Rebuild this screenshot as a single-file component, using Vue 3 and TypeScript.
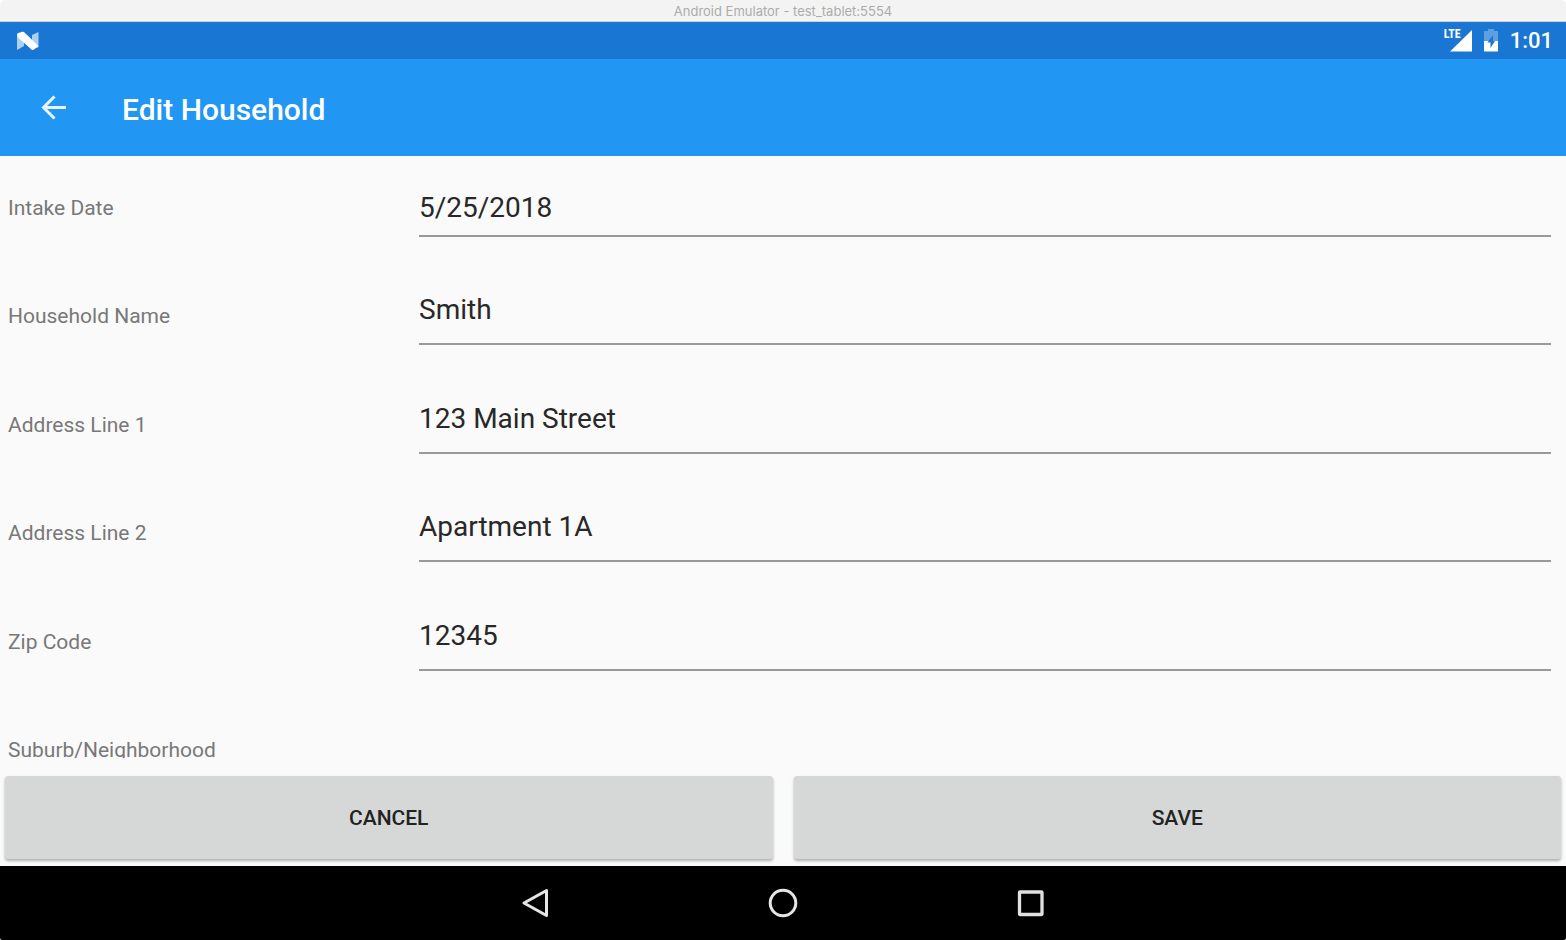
<script setup lang="ts">
import { ref } from 'vue'

interface Field {
  id: string
  label: string
  value: string
}

const fields = ref<Field[]>([
  { id: 'intake-date', label: 'Intake Date', value: '5/25/2018' },
  { id: 'household-name', label: 'Household Name', value: 'Smith' },
  { id: 'address-1', label: 'Address Line 1', value: '123 Main Street' },
  { id: 'address-2', label: 'Address Line 2', value: 'Apartment 1A' },
  { id: 'zip-code', label: 'Zip Code', value: '12345' },
  { id: 'suburb', label: 'Suburb/Neighborhood', value: '' },
])
</script>

<template>
  <div class="window">
    <div class="titlebar">Android Emulator - test_tablet:5554</div>

    <div class="statusbar">
      <svg class="nougat" width="24" height="20" viewBox="0 0 24 20" aria-hidden="true">
        <path d="M1 3 L3 1.500 L8 6 V15 L1 19 Z" fill="#fff" fill-opacity=".65" />
        <path d="M16 4 L22.500 1 V16 L21 17 L16 12 Z" fill="#fff" fill-opacity=".65" />
        <path d="M1.500 2.500 L6 .8 Q7.500 .4 8.500 1.500 L22.500 15 L18 18.500 Q16.500 19.400 15.500 18.400 L1.500 6 Z" fill="#fff" />
      </svg>
      <div class="status-icons">
        <span class="signal">
          <span class="lte">LTE</span>
          <svg width="22" height="22" viewBox="0 0 22 22" aria-hidden="true">
            <path d="M22 0 V21.500 H0 Z" fill="#fff" />
          </svg>
        </span>
        <svg class="battery" width="14" height="24" viewBox="0 0 14 24" aria-hidden="true">
          <path d="M4 0 H10 V2 H14 V12 H0 V2 H4 Z" fill="#fff" fill-opacity=".3" />
          <path d="M0 12 H14 V22.500 H0 Z" fill="#fff" />
          <path d="M9 6 L3.500 13.500 H6.500 V19 L11 12 H9 Z" fill="#1976d2" />
        </svg>
        <span class="clock">1:01</span>
      </div>
    </div>

    <header class="toolbar">
      <button class="back" type="button" aria-label="Back">
        <svg width="26" height="26" viewBox="0 0 26 26" aria-hidden="true">
          <path d="M13.500 1.500 L2.500 12.500 L13.500 23.500 M2.500 12.500 H25" fill="none" stroke="#fff" stroke-opacity=".9" stroke-width="3" />
        </svg>
      </button>
      <h1>Edit Household</h1>
    </header>

    <main class="form">
      <div v-for="field in fields" :key="field.id" class="row">
        <label :for="field.id">{{ field.label }}</label>
        <input :id="field.id" v-model="field.value" type="text" />
      </div>
    </main>

    <div class="actions">
      <button type="button">CANCEL</button>
      <button type="button">SAVE</button>
    </div>

    <nav class="navbar">
      <button type="button" aria-label="Back">
        <svg width="30" height="30" viewBox="0 0 30 30" aria-hidden="true">
          <path d="M26.500 2.500 V27.500 L4 15 Z" fill="none" stroke="#e6e6e6" stroke-width="3" stroke-linejoin="round" />
        </svg>
      </button>
      <button type="button" aria-label="Home">
        <svg width="30" height="30" viewBox="0 0 30 30" aria-hidden="true">
          <circle cx="15" cy="15" r="12.800" fill="none" stroke="#e6e6e6" stroke-width="3" />
        </svg>
      </button>
      <button type="button" aria-label="Overview">
        <svg width="30" height="30" viewBox="0 0 30 30" aria-hidden="true">
          <rect x="3.500" y="4" width="22.500" height="22.500" rx=".5" fill="none" stroke="#e0e0e0" stroke-width="3.300" />
        </svg>
      </button>
    </nav>
  </div>
</template>

<style>
body {
  margin: 0;
  background: #fff;
}
</style>

<style scoped>
.window {
  display: flex;
  flex-direction: column;
  height: 100vh;
  overflow: hidden;
  border-radius: 5px 5px 2px 2px;
  background: #fafafa;
  font-family: Roboto, sans-serif;
}

button {
  padding: 0;
  border: 0;
  background: none;
  font-family: inherit;
}

svg {
  display: block;
}

.titlebar {
  box-sizing: border-box;
  flex: none;
  height: 22px;
  border-bottom: 1px solid #d2d2d2;
  background: #f3f3f3;
  color: #acacac;
  font: 13px/22px Inter, sans-serif;
  text-align: center;
}

.statusbar {
  display: flex;
  flex: none;
  align-items: center;
  justify-content: space-between;
  height: 37px;
  padding: 0 13px 0 16px;
  background: #1976d2;
  color: #fff;
}

.status-icons {
  display: flex;
  align-items: center;
  gap: 12px;
}

.signal {
  position: relative;
  padding-left: 6px;
}

.lte {
  position: absolute;
  top: -2px;
  left: 0;
  font: bold 12px/12px "Liberation Sans Narrow", "Roboto Condensed", Roboto, sans-serif;
}

.clock {
  font-size: 22px;
  font-weight: 500;
  line-height: 36px;
}

.toolbar {
  display: flex;
  flex: none;
  align-items: center;
  height: 97px;
  background: #2196f3;
}

.back {
  width: 107px;
  padding-left: 41px;
}

h1 {
  margin: 0;
  padding: 4px 0 0 15px;
  color: #fff;
  font-size: 30px;
  font-weight: 500;
  line-height: 40px;
}

.form {
  flex: 1;
  min-height: 0;
  overflow: hidden;
}

.row {
  display: grid;
  grid-template-columns: 411px 1fr;
  align-items: end;
  height: 109px;
  padding: 0 15px 0 8px;
}

.row:nth-child(even) {
  height: 108px;
}

.row:first-child {
  height: 81px;
}

label {
  padding-bottom: 15px;
  color: #787878;
  font-size: 21px;
  line-height: 28px;
}

input {
  width: 100%;
  box-sizing: border-box;
  height: 56px;
  padding: 0 0 14px;
  border: 0;
  border-bottom: 2px solid #999;
  border-radius: 0;
  outline: 0;
  background: none;
  color: #282828;
  font: 28px/40px Roboto, sans-serif;
}

.row:first-child input {
  padding-bottom: 8px;
  height: 50px;
}

.actions {
  display: grid;
  flex: none;
  grid-template-columns: 1fr 1fr;
  gap: 21px;
  padding: 18px 5px 7px;
}

.actions button {
  height: 83px;
  border-radius: 3px;
  background: #d6d8d7;
  box-shadow: 0 2px 3px rgba(0, 0, 0, .3);
  color: #222;
  font-size: 21px;
  font-weight: 500;
}

.navbar {
  display: flex;
  flex: none;
  align-items: center;
  justify-content: center;
  gap: 218px;
  height: 74px;
  background: #000;
}
</style>
